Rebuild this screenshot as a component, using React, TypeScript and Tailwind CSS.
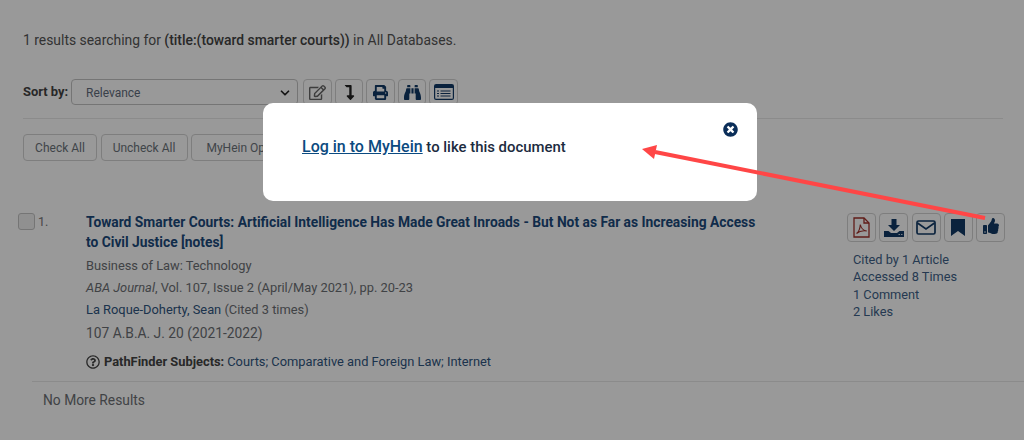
import {
  FaBinoculars,
  FaLevelDownAlt,
  FaPrint,
  FaRegEdit,
  FaRegQuestionCircle,
  FaThumbsUp,
  FaTimesCircle,
} from "react-icons/fa";
import { ChevronDown } from "lucide-react";

const iconBtn =
  "flex items-center justify-center rounded border border-[#d2d2d2] text-[#123a66]";

const actionBtn =
  "h-[27px] rounded border border-[#d2d2d2] text-[12px] text-[#6b737a] flex items-center justify-center";

function ListIcon() {
  return (
    <svg width="20" height="16" viewBox="0 0 20 16">
      <rect x="0.6" y="0.6" width="18.8" height="14.8" rx="1.500" fill="none" stroke="currentColor" strokeWidth="1.200" />
      <rect x="1" y="1" width="18" height="3" fill="currentColor" />
      <path d="M3 7h2M6.500 7h10M3 9.500h2M6.500 9.500h10M3 12h2M6.500 12h10" stroke="currentColor" strokeWidth="1.100" />
    </svg>
  );
}

function PdfIcon() {
  return (
    <svg width="17" height="21" viewBox="0 0 17 21" fill="none" stroke="#a0302a" strokeWidth="1.300">
      <path d="M1 1h10l5 5v14H1z" />
      <path d="M11 1v5h5" />
      <path d="M3.500 16.500c2-1.500 3.500-4.500 3.800-9 .8 4 3 6 6.500 6.500-3.500-.5-7.500 0-10.300 2.500z" strokeWidth="1.100" />
    </svg>
  );
}

function DownloadIcon() {
  return (
    <svg width="20" height="18" viewBox="0 0 20 18" fill="currentColor">
      <path d="M7.500 0h5v6h3.500l-6 6-6-6h3.500z" />
      <path d="M0 12h4.500l2.500 2h6l2.500-2H20v6H0z" />
      <path d="M14.500 15.500h1.500M17 15.500h1.500" stroke="#c9d2dc" strokeWidth="1" />
    </svg>
  );
}

function MailIcon() {
  return (
    <svg width="20" height="15" viewBox="0 0 20 15" fill="none" stroke="currentColor" strokeWidth="1.700">
      <rect x="1" y="1" width="18" height="13" rx="1.500" />
      <path d="M1.500 3l8.500 6 8.500-6" />
    </svg>
  );
}

function BookmarkIcon() {
  return (
    <svg width="14" height="17" viewBox="0 0 14 17" fill="currentColor">
      <path d="M0 0h14v17l-7-5-7 5z" />
    </svg>
  );
}

export default function App() {
  return (
    <div className="relative h-[440px] w-[1024px] overflow-hidden bg-white font-['Roboto',sans-serif]">
      {/* Results page */}
      <div className="flex flex-col pl-[23px]">
        <p className="mt-[32px] text-[13.900px] leading-[17px] text-[#555]">
          1 results searching for <b className="font-medium text-[#444]">(title:(toward smarter courts))</b> in All Databases.
        </p>

        <div className="mt-[30px] flex h-[26px] items-center">
          <span className="w-[48px] text-[12.900px] font-bold text-[#444]">Sort by:</span>
          <div className="flex h-[26px] w-[227px] items-center justify-between rounded border border-[#c4c4c4] pl-[14px] pr-[5px] pt-[1px] text-[12px] text-[#5f6c7c]">
            Relevance
            <ChevronDown size={14} strokeWidth={3} className="text-[#222]" />
          </div>
          <div className="ml-[5px] flex gap-[3px]">
            <div className={`${iconBtn} h-[26px] w-[29px]`}><FaRegEdit size={17} className="text-[#666]" /></div>
            <div className={`${iconBtn} h-[26px] w-[28px]`}><FaLevelDownAlt size={15} className="text-[#222]" /></div>
            <div className={`${iconBtn} h-[26px] w-[29px]`}><FaPrint size={15} /></div>
            <div className={`${iconBtn} h-[26px] w-[28px]`}><FaBinoculars size={17} /></div>
            <div className={`${iconBtn} h-[26px] w-[29px]`}><ListIcon /></div>
          </div>
        </div>

        <div className="mt-[13px] h-px w-[980px] bg-[#e8e8e8]" />

        <div className="mt-[15px] flex gap-[3.500px]">
          <div className={`${actionBtn} w-[74px]`}>Check All</div>
          <div className={`${actionBtn} w-[87px]`}>Uncheck All</div>
          <div className={`${actionBtn} w-[116px]`}>MyHein Options</div>
        </div>

        {/* Result row */}
        <div className="mt-[51px] flex">
          <div className="ml-[-5px] mt-[1px] flex w-[68px] items-start">
            <div className="h-[17px] w-[17px] rounded-[3px] border border-[#c4c4c4] bg-[#f0f0f0]" />
            <span className="ml-[3px] text-[12.500px] leading-[17px] text-[#777]">1.</span>
          </div>
          <div className="w-[690px] text-[12.850px] text-[#6c6f74]">
            <h3 className="w-[680px] text-[13.800px] font-bold leading-[20px] text-[#1b4a7c]">
              Toward Smarter Courts: Artificial Intelligence Has Made Great Inroads - But Not as Far as Increasing Access to Civil Justice [notes]
            </h3>
            <p className="mt-[5px] leading-[18px]">Business of Law: Technology</p>
            <p className="mt-[4px] leading-[18px]"><i>ABA Journal</i>, Vol. 107, Issue 2 (April/May 2021), pp. 20-23</p>
            <p className="mt-[4px] leading-[18px]"><span className="text-[#2f5580]">La Roque-Doherty, Sean</span> (Cited 3 times)</p>
            <p className="mt-[4px] text-[13.800px] leading-[20px]">107 A.B.A. J. 20 (2021-2022)</p>
            <p className="mt-[10px] flex items-center leading-[18px]">
              <FaRegQuestionCircle size={14} className="mr-[4px] text-[#444]" />
              <b className="mr-[3px] font-bold text-[#444]">PathFinder Subjects:</b>
              <span className="text-[#2f5580]">Courts; Comparative and Foreign Law; Internet</span>
            </p>
          </div>
          <div className="ml-[71px] mt-[1px] flex flex-col">
            <div className="flex gap-[3.250px]">
              <div className={`${iconBtn} h-[29px] w-[29px]`}><PdfIcon /></div>
              <div className={`${iconBtn} h-[29px] w-[29px]`}><DownloadIcon /></div>
              <div className={`${iconBtn} h-[29px] w-[29px]`}><MailIcon /></div>
              <div className={`${iconBtn} h-[29px] w-[29px]`}><BookmarkIcon /></div>
              <div className={`${iconBtn} h-[29px] w-[29px]`}><FaThumbsUp size={16} className="mb-[3px]" /></div>
            </div>
            <div className="mt-[9px] pl-[6px] text-[12.750px] leading-[17px] text-[#3e5f88]">
              <p>Cited by 1 Article</p>
              <p>Accessed 8 Times</p>
              <p className="mt-[1px]">1 Comment</p>
              <p>2 Likes</p>
            </div>
          </div>
        </div>

        <div className="ml-[9px] mt-[10px] h-px w-[992px] bg-[#e8e8e8]" />
        <p className="ml-[20px] mt-[9px] text-[13.800px] leading-[18px] text-[#6c6f74]">No More Results</p>
      </div>

      {/* Dimmed backdrop */}
      <div className="absolute inset-0 bg-black/40" />

      {/* Login dialog */}
      <div className="absolute left-[263px] top-[103px] flex h-[98px] w-[494px] items-start rounded-[10px] bg-white pl-[39px] pt-[33px] text-[14.900px] font-medium leading-[21px] text-[#1c2b40]">
        <p>
          <a className="text-[16px] text-[#0b4a80] underline">Log in to MyHein</a> to like this document
        </p>
        <FaTimesCircle size={15} className="absolute right-[19px] top-[19px] text-[#0b2e59]" />
      </div>

      {/* Annotation arrow */}
      <svg className="absolute inset-0" width="1024" height="440" viewBox="0 0 1024 440">
        <line x1="985" y1="218" x2="655" y2="152" stroke="#ff4646" strokeWidth="4" />
        <polygon points="642,149 657,145 654,159" fill="#ff4646" />
      </svg>
    </div>
  );
}
